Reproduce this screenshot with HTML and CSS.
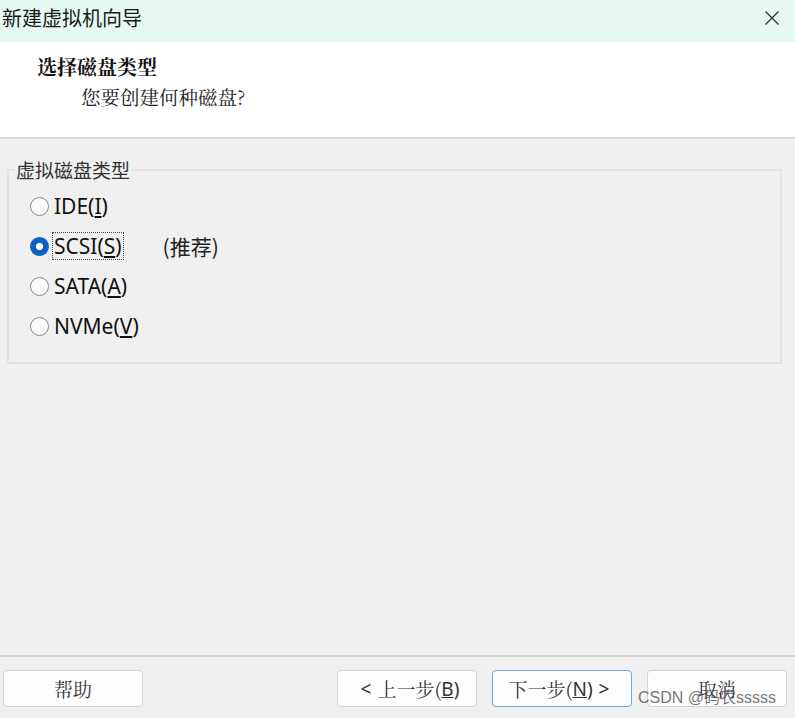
FILE: index.html
```html
<!DOCTYPE html>
<html lang="zh-CN">
<head>
<meta charset="utf-8">
<title>新建虚拟机向导</title>
<link rel="stylesheet" href="styles.css">
</head>
<body>
<div class="window">
  <div class="titlebar">
    <span class="title">新建虚拟机向导</span>
    <svg class="close" width="16" height="16" viewBox="0 0 16 16"><path d="M1.5 1.5 L14.5 14.5 M14.5 1.5 L1.5 14.5" stroke="#333" stroke-width="1.4" fill="none"/></svg>
  </div>
  <div class="header">
    <div class="heading">选择磁盘类型</div>
    <div class="subheading">您要创建何种磁盘?</div>
  </div>
  <div class="content">
    <fieldset class="group">
      <legend class="legend">虚拟磁盘类型</legend>
      <div class="option"><span class="radio"></span><span class="label">IDE(<u>I</u>)</span></div>
      <div class="option"><span class="radio checked"></span><span class="label focus">SCSI(<u>S</u>)</span><span class="note">(推荐)</span></div>
      <div class="option"><span class="radio"></span><span class="label">SATA(<u>A</u>)</span></div>
      <div class="option"><span class="radio"></span><span class="label">NVMe(<u>V</u>)</span></div>
    </fieldset>
  </div>
  <div class="footer">
    <button class="btn">帮助</button>
    <div class="btn-group">
      <button class="btn"><span class="sym">&lt;</span> 上一步(<u class="lat">B</u><span class="lat">)</span></button>
      <button class="btn primary">下一步(<u class="lat">N</u><span class="lat">)</span> <span class="sym">&gt;</span></button>
      <button class="btn">取消</button>
    </div>
  </div>
  <div class="watermark">CSDN @码农sssss</div>
</div>
</body>
</html>
```

FILE: styles.css
```css
html, body {
  margin: 0;
  padding: 0;
}
body {
  background: #f0f0f0;
  font-family: "Noto Sans", "Noto Sans CJK SC", sans-serif;
}
.window {
  position: relative;
  width: 795px;
  height: 718px;
  display: flex;
  flex-direction: column;
  background: #f0f0f0;
  overflow: hidden;
}
.titlebar {
  height: 42px;
  flex: none;
  background: #e5f8f1;
  display: flex;
  align-items: center;
  justify-content: space-between;
  padding: 0 15px 6px 2px;
  box-sizing: border-box;
}
.title {
  font-family: "Noto Sans CJK SC", sans-serif;
  font-size: 20px;
  color: #1a1a1a;
  line-height: 24px;
}
.close {
  display: block;
}
.header {
  height: 97px;
  flex: none;
  background: #ffffff;
  border-bottom: 2px solid #d9d9d9;
  padding: 13px 0 0 37px;
  box-sizing: border-box;
}
.heading {
  font-family: "Noto Serif CJK SC", "Noto Sans CJK SC", serif;
  font-weight: bold;
  font-size: 20px;
  line-height: 24px;
  color: #111;
}
.subheading {
  font-family: "Noto Serif CJK SC", "Noto Sans CJK SC", serif;
  font-size: 19.5px;
  line-height: 24px;
  color: #222;
  margin-top: 6px;
  padding-left: 44px;
}
.content {
  flex: 1;
  padding: 19px 13px 0 7px;
}
.group {
  margin: 0;
  height: 206px;
  box-sizing: border-box;
  border: 2px solid #e3e3e3;
  border-radius: 0;
  padding: 4px 0 0 21px;
}
.legend {
  font-family: "Noto Sans CJK SC", sans-serif;
  font-size: 19px;
  color: #333;
  padding: 0 1px;
  margin-left: -15px;
  line-height: 24px;
}
.option {
  display: flex;
  align-items: center;
  height: 40px;
}
.radio {
  width: 19px;
  height: 19px;
  border: 1.5px solid #8a8a8a;
  border-radius: 50%;
  box-sizing: border-box;
  background: #fafafa;
  margin-right: 4px;
  flex: none;
}
.radio.checked {
  border: none;
  background: radial-gradient(circle, #ffffff 0 3.3px, #0a63c0 3.9px);
}
.label {
  font-family: "Noto Sans", "Noto Sans CJK SC", sans-serif;
  font-size: 21px;
  color: #111;
  line-height: 26px;
  padding: 0 1px;
}
.label u {
  text-underline-offset: 2px;
}
.focus {
  outline: 1px dotted #444;
  outline-offset: 0;
}
.note {
  font-family: "Noto Sans CJK SC", sans-serif;
  font-size: 21px;
  color: #222;
  margin-left: 40px;
}
.footer {
  height: 63px;
  flex: none;
  border-top: 2px solid #d4d4d4;
  box-sizing: border-box;
  display: flex;
  justify-content: space-between;
  align-items: flex-start;
  padding: 13px 8px 0 3px;
}
.btn-group {
  display: flex;
  gap: 15px;
}
.btn {
  width: 140px;
  height: 37px;
  background: #fdfdfd;
  border: 1px solid #d3d3d3;
  border-radius: 4px;
  font-family: "Noto Serif CJK SC", "Noto Sans CJK SC", serif;
  font-size: 19px;
  color: #333;
  padding: 0;
  display: flex;
  align-items: center;
  justify-content: center;
}
.btn.primary {
  border: 1.5px solid #6aa6e0;
}
.lat, .sym {
  font-family: "Noto Sans", sans-serif;
  font-size: 19px;
}
.sym {
  margin: 0 6px;
}
.watermark {
  position: absolute;
  left: 638px;
  top: 688px;
  font-family: "Liberation Sans", "Noto Sans CJK SC", sans-serif;
  font-size: 16px;
  color: rgba(90, 90, 90, 0.85);
  line-height: 20px;
  white-space: nowrap;
}
```
